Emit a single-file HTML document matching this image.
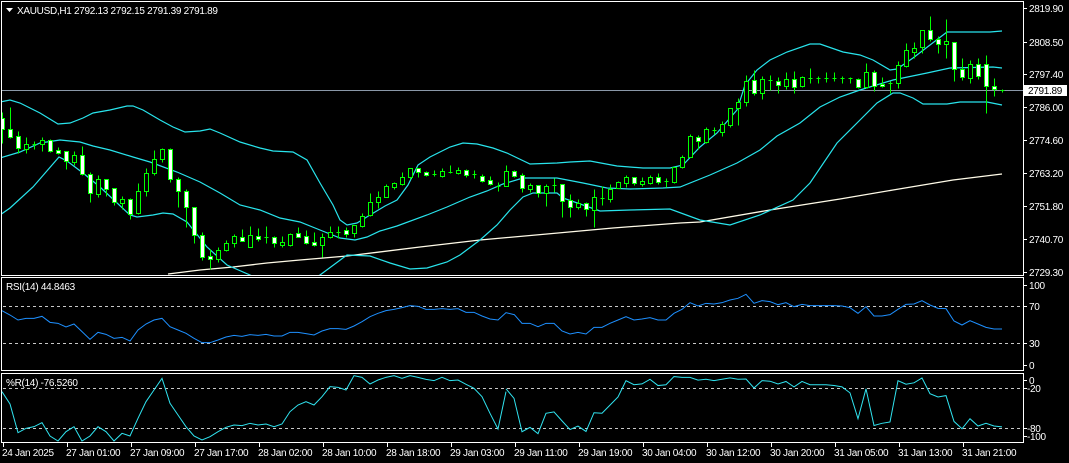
<!DOCTYPE html>
<html><head><meta charset="utf-8"><style>
html,body{margin:0;padding:0;background:#000;}
svg{display:block;}
text{font-family:"Liberation Sans",sans-serif;font-size:10px;fill:#fff;letter-spacing:-0.3px;}
</style></head><body>
<svg width="1069" height="463" viewBox="0 0 1069 463" xmlns="http://www.w3.org/2000/svg">
<rect width="1069" height="463" fill="#000"/>
<g shape-rendering="crispEdges" fill="none" stroke="#fff" stroke-width="1">
<rect x="1.5" y="1.5" width="1022" height="274"/>
<rect x="1.5" y="277.5" width="1022" height="93"/>
<rect x="1.5" y="373.5" width="1022" height="69"/>
</g>
<!-- price line -->
<line x1="2" y1="90.5" x2="1023" y2="90.5" stroke="#8a98a8" stroke-width="1" shape-rendering="crispEdges"/>
<!-- dashed levels -->
<g stroke="#c8c8c8" stroke-dasharray="3,3" stroke-width="1" shape-rendering="crispEdges">
<line x1="3" y1="306.5" x2="1022" y2="306.5"/>
<line x1="3" y1="343.5" x2="1022" y2="343.5"/>
<line x1="3" y1="388.5" x2="1022" y2="388.5"/>
<line x1="3" y1="428.5" x2="1022" y2="428.5"/>
</g>
<svg x="2" y="2" width="1021" height="273" viewBox="2 2 1021 273" overflow="hidden">
<!-- white MA -->
<polyline fill="none" stroke="#fffbe8" stroke-width="1.3" points="168,274 200,270 233,267 267,263 300,260 347,256 420,247 480,240 547,234 613,228 680,223 700,222 770,210 840,199 893,190 953,180 1002,174"/>
<!-- bollinger -->
<g fill="none" stroke="#28e4ec" stroke-width="1.2">
<polyline points="0,102 10,100 20,103 40,113 58,124 70,123 83,118 93,113 110,110 127,106 133,106 143,110 160,120 173,127 185,132 200,131 210,129 220,133 240,142 260,148 273,151 293,152 307,160 320,183 333,205 340,220 347,225 357,223 370,215 385,206 397,200 408,185 418,165 430,157 450,147 463,143 477,144 493,148 507,153 530,164 557,163 570,162 590,161 617,166 643,168 670,168 683,165 700,147 717,133 737,110 745,85 757,70 770,60 787,52 810,44 820,44 843,52 860,55 873,60 890,70 897,69 913,58 930,45 947,32 990,32 1002,31"/>
<polyline points="0,158 20,152 40,143 60,140 80,142 93,146 110,150 133,157 150,162 177,172 200,182 220,193 240,205 260,210 280,218 300,222 320,230 340,238 355,240 367,237 380,231 397,226 427,215 447,207 470,197 487,191 503,184 523,178 557,178 583,183 607,188 630,189 663,188 680,187 710,175 737,163 760,150 777,136 800,123 820,107 840,97 860,90 893,80 927,73 950,68 993,67 1002,68"/>
<polyline points="0,215 10,208 33,187 59,157 67,161 83,173 100,187 130,215 137,217 153,215 163,213 173,214 187,222 207,247 227,265 250,275 265,282 300,285 320,275 347,255 370,256 390,263 410,269 427,268 447,262 460,255 480,240 497,225 510,210 523,197 533,193 557,193 563,198 583,205 600,211 630,210 670,209 700,220 730,225 760,215 793,200 810,183 837,143 860,120 877,103 893,93 900,93 913,98 923,104 947,104 960,102 987,102 1002,105"/>
</g>
<!-- candles -->
<g transform="translate(0.5,0.5)" shape-rendering="crispEdges" stroke="#00ff00" stroke-width="1">
<path fill="none" d="M2 112V143M10 107V138M18 131V153M26 137V153M34 141V149M42 137V151M50 139V152M58 147V154M66 151V169M74 151V165M82 146V175M90 172V202M98 175V197M106 179V196M114 188V205M122 196V209M130 198V219M138 183V214M146 168V196M154 150V175M162 148V162M170 148V182M178 177V207M186 189V227M194 207V243M202 232V260M210 249V269M218 247V262M226 240V251M234 234V247M242 229V241M250 226V247M258 228V241M266 226V243M274 236V247M282 236V247M290 233V246M298 227V237M306 230V244M314 232V246M322 233V257M330 226V238M338 226V238M346 227V237M354 225V237M362 213V227M370 193V216M378 191V208M386 184V197M394 182V189M402 172V185M410 168V179M418 168V177M426 171V176M434 170V176M442 168V177M450 165V173M458 167V174M466 169V177M474 170V178M482 174V182M490 176V185M498 182V191M506 165V186M514 170V177M522 173V192M530 183V192M538 185V197M546 184V206M554 178V192M562 184V217M570 194V217M578 199V209M586 202V216M594 189V227M602 186V205M610 184V202M618 181V188M626 175V187M634 177V185M642 177V186M650 175V184M658 173V184M666 178V187M674 167V183M682 155V168M690 134V157M698 135V149M706 127V143M714 127V134M722 121V136M730 108V127M738 98V125M746 75V106M754 70V95M762 76V99M770 75V90M778 77V93M786 72V89M794 71V93M802 76V87M810 68V83M818 76V83M826 72V82M834 72V81M842 76V83M850 77V83M858 78V88M866 63V88M874 70V91M882 77V87M890 81V93M898 61V88M906 43V67M914 42V58M922 30V53M930 16V41M938 36V53M946 19V58M954 42V81M962 58V80M970 60V83M978 58V79M986 55V113M994 78V96M1002 89V92M32 144H36M264 237H268M336 232H340M432 174H436M448 172H452M472 174H476M496 186H500M552 185H556M600 198H604M664 181H668M712 130H716M768 80H772M808 78H812M816 78H820M824 78H828M832 78H836M840 78H844M848 78H852M888 83H892M1000 90H1004"/>
<g fill="#fff">
<rect x="0" y="118" width="4" height="11"/><rect x="8" y="129" width="4" height="8"/><rect x="16" y="136" width="4" height="12"/><rect x="48" y="140" width="4" height="11"/><rect x="56" y="150" width="4" height="3"/><rect x="64" y="151" width="4" height="10"/><rect x="80" y="155" width="4" height="19"/><rect x="88" y="174" width="4" height="19"/><rect x="104" y="179" width="4" height="10"/><rect x="112" y="188" width="4" height="14"/><rect x="128" y="199" width="4" height="15"/><rect x="168" y="149" width="4" height="30"/><rect x="176" y="179" width="4" height="12"/><rect x="184" y="191" width="4" height="16"/><rect x="192" y="207" width="4" height="28"/><rect x="200" y="235" width="4" height="22"/><rect x="208" y="256" width="4" height="3"/><rect x="240" y="237" width="4" height="4"/><rect x="256" y="236" width="4" height="3"/><rect x="272" y="237" width="4" height="6"/><rect x="296" y="233" width="4" height="4"/><rect x="304" y="236" width="4" height="7"/><rect x="312" y="242" width="4" height="3"/><rect x="344" y="230" width="4" height="4"/><rect x="416" y="168" width="4" height="4"/><rect x="424" y="172" width="4" height="3"/><rect x="464" y="170" width="4" height="5"/><rect x="480" y="176" width="4" height="5"/><rect x="488" y="180" width="4" height="4"/><rect x="512" y="171" width="4" height="5"/><rect x="520" y="175" width="4" height="13"/><rect x="536" y="185" width="4" height="8"/><rect x="560" y="184" width="4" height="17"/><rect x="568" y="200" width="4" height="7"/><rect x="584" y="203" width="4" height="6"/><rect x="632" y="177" width="4" height="6"/><rect x="656" y="177" width="4" height="5"/><rect x="696" y="137" width="4" height="4"/><rect x="752" y="80" width="4" height="13"/><rect x="776" y="81" width="4" height="4"/><rect x="792" y="79" width="4" height="8"/><rect x="856" y="79" width="4" height="8"/><rect x="872" y="72" width="4" height="14"/><rect x="880" y="84" width="4" height="2"/><rect x="928" y="30" width="4" height="9"/><rect x="936" y="39" width="4" height="5"/><rect x="952" y="42" width="4" height="27"/><rect x="960" y="69" width="4" height="8"/><rect x="976" y="64" width="4" height="12"/><rect x="984" y="64" width="4" height="22"/><rect x="992" y="86" width="4" height="3"/>
</g>
<g fill="#000">
<rect x="24" y="144" width="4" height="5"/><rect x="40" y="140" width="4" height="4"/><rect x="72" y="155" width="4" height="7"/><rect x="96" y="179" width="4" height="15"/><rect x="120" y="199" width="4" height="4"/><rect x="136" y="191" width="4" height="22"/><rect x="144" y="173" width="4" height="18"/><rect x="152" y="159" width="4" height="14"/><rect x="160" y="149" width="4" height="10"/><rect x="216" y="250" width="4" height="9"/><rect x="224" y="243" width="4" height="7"/><rect x="232" y="236" width="4" height="7"/><rect x="248" y="235" width="4" height="12"/><rect x="280" y="242" width="4" height="3"/><rect x="288" y="234" width="4" height="11"/><rect x="320" y="237" width="4" height="8"/><rect x="328" y="232" width="4" height="5"/><rect x="352" y="225" width="4" height="8"/><rect x="360" y="216" width="4" height="10"/><rect x="368" y="202" width="4" height="13"/><rect x="376" y="197" width="4" height="5"/><rect x="384" y="186" width="4" height="11"/><rect x="392" y="183" width="4" height="4"/><rect x="400" y="177" width="4" height="7"/><rect x="408" y="168" width="4" height="9"/><rect x="440" y="171" width="4" height="5"/><rect x="456" y="170" width="4" height="3"/><rect x="504" y="171" width="4" height="15"/><rect x="528" y="185" width="4" height="4"/><rect x="544" y="186" width="4" height="7"/><rect x="576" y="203" width="4" height="4"/><rect x="592" y="197" width="4" height="13"/><rect x="608" y="189" width="4" height="10"/><rect x="616" y="182" width="4" height="6"/><rect x="624" y="177" width="4" height="6"/><rect x="640" y="181" width="4" height="3"/><rect x="648" y="177" width="4" height="6"/><rect x="672" y="167" width="4" height="15"/><rect x="680" y="157" width="4" height="10"/><rect x="688" y="136" width="4" height="21"/><rect x="704" y="129" width="4" height="13"/><rect x="720" y="124" width="4" height="8"/><rect x="728" y="108" width="4" height="17"/><rect x="736" y="102" width="4" height="6"/><rect x="744" y="81" width="4" height="21"/><rect x="760" y="79" width="4" height="14"/><rect x="784" y="79" width="4" height="7"/><rect x="800" y="77" width="4" height="9"/><rect x="864" y="72" width="4" height="15"/><rect x="896" y="65" width="4" height="18"/><rect x="904" y="50" width="4" height="16"/><rect x="912" y="48" width="4" height="4"/><rect x="920" y="30" width="4" height="17"/><rect x="944" y="41" width="4" height="3"/><rect x="968" y="64" width="4" height="14"/>
</g>
</g>
</svg>
<!-- RSI -->
<g fill="none" stroke="#1e90ff" stroke-width="1">
<polyline vector-effect="non-scaling-stroke" transform="translate(0,280) scale(0.33333)" points="6,92 30,105 54,120 78,115 102,115 126,109 150,127 174,130 198,141 222,132 246,155 270,178 294,157 318,163 342,175 366,172 390,183 414,150 438,132 462,120 486,115 510,140 534,150 558,160 582,175 606,188 630,188 654,180 678,171 702,166 726,169 750,164 774,166 798,163 822,168 846,168 870,157 894,157 918,161 942,165 966,153 990,146 1014,146 1038,148 1062,138 1086,125 1110,110 1134,100 1158,92 1182,88 1206,83 1230,77 1254,79 1278,88 1302,88 1326,86 1350,88 1374,86 1398,97 1422,97 1446,108 1470,117 1494,120 1518,98 1542,104"/>
<polyline vector-effect="non-scaling-stroke" transform="translate(510,280) scale(0.33333)" points="12,103 36,130 60,130 84,140 108,130 132,130 156,153 180,162 204,157 228,162 252,142 276,142 300,130 324,120 348,110 372,120 396,117 420,113 444,120 468,120 492,100 516,88 540,68 564,78 588,70 612,72 636,68 660,60 684,55 708,43 732,70 756,62 780,65 804,74 828,68 852,80 876,73 900,77 924,77 948,77 972,77 996,78 1020,83 1044,100 1068,80 1092,108 1116,108 1140,104 1164,88 1188,73 1212,72 1236,62 1260,75 1284,85 1308,86 1332,123 1356,135 1380,122 1404,132 1428,142 1452,147 1476,147"/>
</g>
<!-- %R -->
<g fill="none" stroke="#30e4f0" stroke-width="1">
<polyline vector-effect="non-scaling-stroke" transform="translate(0,280) scale(0.33333)" points="6,335 30,372 54,458 78,445 102,440 126,428 150,468 174,483 198,455 222,440 246,483 270,468 294,440 318,455 342,483 366,460 390,468 414,415 438,365 462,330 486,295 510,370 534,405 558,440 582,468 606,480 630,470 654,455 678,442 702,435 726,437 750,430 774,435 798,432 822,440 846,432 870,395 894,375 918,365 942,375 966,350 990,320 1014,322 1038,330 1062,287 1086,292 1110,312 1134,300 1158,292 1182,287 1206,295 1230,287 1254,292 1278,298 1302,302 1326,292 1350,302 1374,300 1398,313 1422,325 1446,350 1470,400 1494,447 1518,335"/>
<polyline vector-effect="non-scaling-stroke" transform="translate(510,307.3) scale(0.33333,0.2717)" points="-12,300 12,335 36,458 60,442 84,465 108,390 132,385 156,418 180,450 204,437 228,457 252,388 276,390 300,360 324,330 348,270 372,285 396,282 420,265 444,288 468,285 492,255 516,258 540,258 564,268 588,265 612,270 636,265 660,260 684,265 708,264 732,297 756,270 780,272 804,282 828,273 852,293 876,273 900,285 924,285 948,285 972,288 996,293 1020,315 1044,410 1068,300 1092,435 1116,427 1140,422 1164,270 1188,283 1212,278 1236,260 1260,318 1284,330 1308,325 1332,420 1356,447 1380,410 1404,437 1428,427 1452,437 1476,440"/>
</g>
<!-- titles -->
<path d="M6 8h7l-3.5 4z" fill="#fff"/>
<text x="17" y="14">XAUUSD,H1  2792.13 2792.15 2791.39 2791.89</text>
<text x="6" y="290">RSI(14) 44.8463</text>
<text x="6" y="386">%R(14) -76.5260</text>
<!-- right axis ticks -->
<g stroke="#fff" stroke-width="1" shape-rendering="crispEdges">
<path d="M1024 8.5h3M1024 42.5h3M1024 74.5h3M1024 107.5h3M1024 140.5h3M1024 173.5h3M1024 206.5h3M1024 239.5h3M1024 272.5h3M1024 285.5h3M1024 306.5h3M1024 343.5h3M1024 365.5h3M1024 380.5h3M1024 388.5h3M1024 428.5h3M1024 436.5h3"/>
<path d="M3.5 443v4M67.5 443v4M131.5 443v4M195.5 443v4M259.5 443v4M323.5 443v4M387.5 443v4M451.5 443v4M515.5 443v4M579.5 443v4M643.5 443v4M707.5 443v4M771.5 443v4M835.5 443v4M899.5 443v4M963.5 443v4"/>
</g>
<g>
<text x="1029" y="12">2819.90</text>
<text x="1029" y="46">2808.50</text>
<text x="1029" y="78">2797.40</text>
<text x="1029" y="111">2786.00</text>
<text x="1029" y="144">2774.60</text>
<text x="1029" y="177">2763.20</text>
<text x="1029" y="210">2751.80</text>
<text x="1029" y="243">2740.70</text>
<text x="1029" y="276">2729.30</text>
<text x="1029" y="289">100</text>
<text x="1029" y="310">70</text>
<text x="1029" y="347">30</text>
<text x="1029" y="369">0</text>
<text x="1029" y="384">0</text>
<text x="1027" y="392">-20</text>
<text x="1027" y="432">-80</text>
<text x="1027" y="440">-100</text>
</g>
<rect x="1024" y="85" width="43" height="11" fill="#fff"/>
<text x="1028" y="94" style="fill:#000">2791.89</text>
<!-- time axis -->
<g>
<text x="2" y="456">24 Jan 2025</text>
<text x="66" y="456">27 Jan 01:00</text>
<text x="130" y="456">27 Jan 09:00</text>
<text x="194" y="456">27 Jan 17:00</text>
<text x="258" y="456">28 Jan 02:00</text>
<text x="322" y="456">28 Jan 10:00</text>
<text x="386" y="456">28 Jan 18:00</text>
<text x="450" y="456">29 Jan 03:00</text>
<text x="514" y="456">29 Jan 11:00</text>
<text x="578" y="456">29 Jan 19:00</text>
<text x="642" y="456">30 Jan 04:00</text>
<text x="706" y="456">30 Jan 12:00</text>
<text x="770" y="456">30 Jan 20:00</text>
<text x="834" y="456">31 Jan 05:00</text>
<text x="898" y="456">31 Jan 13:00</text>
<text x="962" y="456">31 Jan 21:00</text>
</g>
</svg>
</body></html>
